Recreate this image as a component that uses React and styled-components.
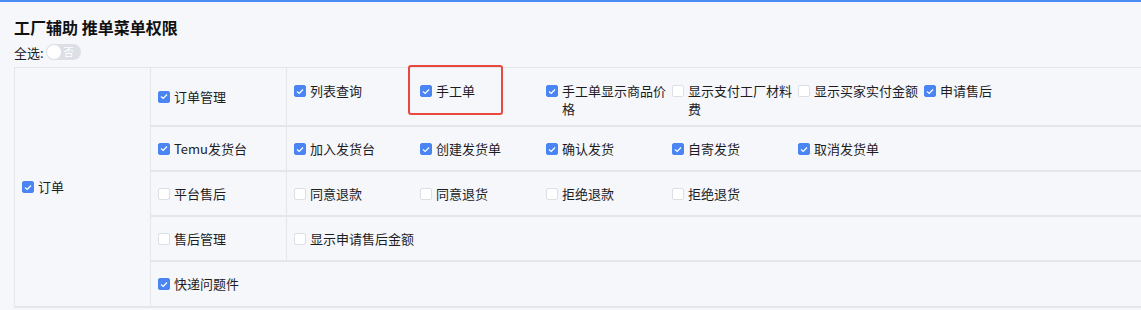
import React from "react";
import styled, { createGlobalStyle } from "styled-components";

const Global = createGlobalStyle`
  body {
    margin: 0;
    background: #f5f7fb;
    overflow: hidden;
    font-family: "Noto Sans CJK SC", "Noto Sans", sans-serif;
    color: #1d1d1f;
  }
`;

const Page = styled.div`
  border-top: 2px solid #4d8cf5;
  padding: 14px 0 0 14px;
`;

const Title = styled.h2`
  margin: 0;
  font-size: 16px;
  line-height: 22px;
  font-weight: 700;
  color: #111;
`;

const SelectAll = styled.div`
  display: flex;
  align-items: center;
  height: 18px;
  margin-top: 5px;
  font-size: 13px;
`;

const Toggle = styled.span`
  display: inline-flex;
  align-items: center;
  width: 35px;
  height: 16px;
  margin-left: 2px;
  border-radius: 8px;
  background: #dcdfe6;
  padding: 0 1px;
  box-sizing: border-box;
  gap: 3px;
  &::before {
    content: "";
    width: 14px;
    height: 14px;
    border-radius: 50%;
    background: #fff;
  }
  span {
    color: #fff;
    font-size: 10px;
    line-height: 1;
  }
`;

const Table = styled.div`
  display: flex;
  width: 1140px;
  margin-top: 6px;
  border-top: 1px solid #e4e6ec;
  border-left: 1px solid #e4e6ec;
  border-bottom: 2px solid #e4e6ec;
`;

const RootCell = styled.div`
  width: 136px;
  flex: none;
  display: flex;
  align-items: center;
  padding: 0 7px;
  box-sizing: border-box;
  border-right: 1px solid #e4e6ec;
`;

const Rows = styled.div`
  flex: 1;
  display: flex;
  flex-direction: column;
`;

const Row = styled.div`
  display: flex;
  & + & {
    border-top: 2px solid #e4e6ec;
  }
`;

const GroupCell = styled.div`
  width: 136px;
  flex: none;
  display: flex;
  align-items: center;
  padding: 0 7px;
  box-sizing: border-box;
  border-right: ${(p) => (p.$alone ? "none" : "1px solid #e4e6ec")};
  min-height: ${(p) => (p.$alone ? "44px" : "43px")};
`;

const Items = styled.div`
  flex: 1;
  display: flex;
  flex-wrap: wrap;
  align-items: flex-start;
  padding: ${(p) => (p.$tall ? "14px 7px 7px" : "13px 7px 12px")};
`;

const Item = styled.label`
  position: relative;
  display: flex;
  align-items: flex-start;
  gap: 4px;
  width: ${(p) => (p.$free ? "auto" : "126px")};
  padding-right: ${(p) => (p.$free ? "0" : "6px")};
  box-sizing: border-box;
  font-size: 13px;
  line-height: 18px;
  white-space: ${(p) => (p.$free ? "nowrap" : "normal")};
`;

const Box = styled.span`
  flex: none;
  width: 12px;
  height: 12px;
  margin-top: 3px;
  border-radius: 2px;
  box-sizing: border-box;
  display: flex;
  align-items: center;
  justify-content: center;
  background: ${(p) => (p.$on ? "#4a85f3" : "#fff")};
  border: 1px solid ${(p) => (p.$on ? "#4a85f3" : "#dcdfe6")};
`;

const Highlight = styled.span`
  position: absolute;
  left: -12px;
  top: -17px;
  width: 95px;
  height: 50px;
  border: 2px solid #e8483e;
  border-radius: 3px;
  box-sizing: border-box;
  pointer-events: none;
`;

function Check({ on, label, free, mark }) {
  return (
    <Item $free={free}>
      <Box $on={on}>
        {on && (
          <svg width="8" height="7" viewBox="0 0 8 7">
            <polyline points="1,3.5 3.2,5.5 7,1.5" fill="none" stroke="#fff" strokeWidth="1.2" />
          </svg>
        )}
      </Box>
      <span>{label}</span>
      {mark && <Highlight />}
    </Item>
  );
}

const groups = [
  {
    label: "订单管理",
    on: true,
    tall: true,
    items: [
      ["列表查询", true],
      ["手工单", true, true],
      ["手工单显示商品价格", true],
      ["显示支付工厂材料费", false],
      ["显示买家实付金额", false],
      ["申请售后", true],
    ],
  },
  {
    label: "Temu发货台",
    on: true,
    items: [
      ["加入发货台", true],
      ["创建发货单", true],
      ["确认发货", true],
      ["自寄发货", true],
      ["取消发货单", true],
    ],
  },
  {
    label: "平台售后",
    on: false,
    items: [
      ["同意退款", false],
      ["同意退货", false],
      ["拒绝退款", false],
      ["拒绝退货", false],
    ],
  },
  {
    label: "售后管理",
    on: false,
    items: [["显示申请售后金额", false]],
  },
  { label: "快递问题件", on: true, items: null },
];

export default function App() {
  return (
    <>
      <Global />
      <Page>
        <Title>工厂辅助 推单菜单权限</Title>
        <SelectAll>
          全选:
          <Toggle>
            <span>否</span>
          </Toggle>
        </SelectAll>
        <Table>
          <RootCell>
            <Check on label="订单" free />
          </RootCell>
          <Rows>
            {groups.map((g) => (
              <Row key={g.label}>
                <GroupCell $alone={!g.items}>
                  <Check on={g.on} label={g.label} free />
                </GroupCell>
                {g.items && (
                  <Items $tall={g.tall}>
                    {g.items.map(([label, on, mark]) => (
                      <Check key={label} on={on} label={label} mark={mark} />
                    ))}
                  </Items>
                )}
              </Row>
            ))}
          </Rows>
        </Table>
      </Page>
    </>
  );
}
